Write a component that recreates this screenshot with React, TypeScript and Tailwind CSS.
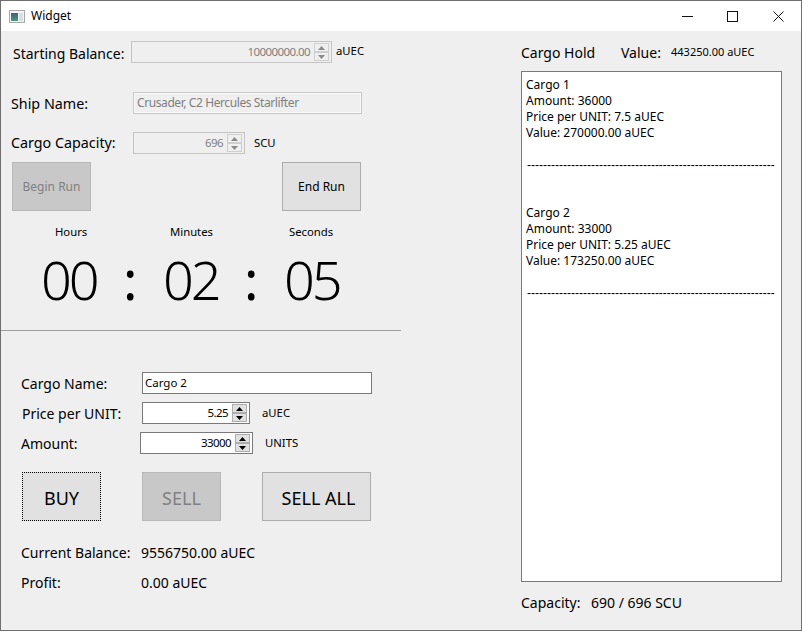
const font = { fontFamily: '"Noto Sans", "Open Sans", sans-serif' };

function Spin({ value, disabled, width, textRight }: { value: string; disabled?: boolean; width: string; textRight: string }) {
  const arrow = disabled ? "#8a8a8a" : "#000000";
  const btn = disabled
    ? "flex-1 flex items-center justify-center border border-[#cfcfcf] bg-[#efefef]"
    : "flex-1 flex items-center justify-center border border-[#adadad] bg-[#e1e1e1]";
  return (
    <div className={`${width} h-[22px] flex items-center border ${disabled ? "border-[#c4c4c4] bg-[#efefef] text-[#808080]" : "border-[#7a7a7a] bg-white text-black"} text-[11.5px] tracking-[-0.58px]`}>
      <div className={`flex-1 text-right ${textRight}`}>{value}</div>
      <div className="w-[15px] h-[18px] mr-[2px] flex flex-col">
        <div className={btn}>
          <svg width="7" height="4" viewBox="0 0 7 4"><path d="M3.5 0L7 4H0z" fill={arrow} /></svg>
        </div>
        <div className={btn}>
          <svg width="7" height="4" viewBox="0 0 7 4"><path d="M0 0H7L3.5 4z" fill={arrow} /></svg>
        </div>
      </div>
    </div>
  );
}

function Btn({ label, disabled, focused, width, size }: { label: string; disabled?: boolean; focused?: boolean; width: string; size: string }) {
  return (
    <div className={`${width} h-[49px] flex items-center justify-center border ${size} ${disabled ? "bg-[#c8c8c8] border-[#b8b8b8] text-[#808080]" : "bg-[#e1e1e1] border-[#adadad] text-black"} ${focused ? "border-dotted border-black" : ""}`}>
      {label}
    </div>
  );
}

export default function App() {
  const cargo = [
    ["Cargo 1", "Amount: 36000", "Price per UNIT: 7.5 aUEC", "Value: 270000.00 aUEC"],
    ["Cargo 2", "Amount: 33000", "Price per UNIT: 5.25 aUEC", "Value: 173250.00 aUEC"],
  ];
  return (
    <div style={font} className="w-[802px] h-[631px] border border-[#6f6f6f] bg-[#efefef] text-black flex flex-col overflow-hidden whitespace-nowrap">
      <div className="h-[30px] bg-white flex items-center shrink-0">
        <svg className="ml-[8px]" width="16" height="13" viewBox="0 0 16 13">
          <defs>
            <linearGradient id="g" x1="0" y1="0" x2="0" y2="1">
              <stop offset="0" stopColor="#3d5f78" />
              <stop offset="1" stopColor="#4f9a78" />
            </linearGradient>
          </defs>
          <rect x="0.5" y="0.5" width="15" height="12" fill="#f4f4f4" stroke="#a8a8a8" />
          <rect x="2" y="3" width="7" height="8" fill="url(#g)" />
          <rect x="10" y="3" width="4" height="8" fill="#d5e0e0" />
        </svg>
        <span className="ml-[6px] text-[12px] leading-none">Widget</span>
        <div className="ml-auto flex items-center h-full">
          <svg className="mr-[34px]" width="11" height="11" viewBox="0 0 11 11"><path d="M0 5.5H11" stroke="#111" /></svg>
          <svg className="mr-[35px]" width="11" height="11" viewBox="0 0 11 11"><rect x="0.5" y="0.5" width="10" height="10" fill="none" stroke="#111" /></svg>
          <svg className="mr-[17px]" width="11" height="11" viewBox="0 0 11 11"><path d="M0.5 0.5L10.5 10.5M10.5 0.5L0.5 10.5" stroke="#111" /></svg>
        </div>
      </div>

      <div className="flex-1 flex">
        <div className="w-[400px] shrink-0 flex flex-col">
          <div className="mt-[10px] h-[22px] flex items-center pl-[12px] text-[14px]">
            <span className="w-[118px] mt-[2px]">Starting Balance:</span>
            <Spin value="10000000.00" disabled width="w-[201px]" textRight="pr-[4px]" />
            <span className="ml-[4px] text-[11.3px] -mt-[2px]">aUEC</span>
          </div>
          <div className="mt-[29px] h-[22px] flex items-center pl-[10px] text-[14.3px]">
            <span className="w-[122px] mt-[2px]">Ship Name:</span>
            <div className="w-[229px] h-[22px] border border-[#c8c8c8] shadow-[inset_0_0_0_1px_#f8f8f8] flex items-center pl-[3px] text-[12px] tracking-[-0.41px] text-[#808080]">Crusader, C2 Hercules Starlifter</div>
          </div>
          <div className="mt-[18px] h-[22px] flex items-center pl-[10px] text-[14.3px]">
            <span className="w-[122px]">Cargo Capacity:</span>
            <Spin value="696" disabled width="w-[112px]" textRight="pr-[4px]" />
            <span className="ml-[9px] text-[11.3px]">SCU</span>
          </div>
          <div className="mt-[8px] flex pl-[11px] gap-[191px]">
            <Btn label="Begin Run" disabled width="w-[79px]" size="text-[12px] pt-[1px]" />
            <Btn label="End Run" width="w-[79px]" size="text-[12px] pt-[1px]" />
          </div>

          <div className="mt-[13px] flex items-center h-[16px] text-[11.3px]">
            <span className="ml-[54px] w-[115px]">Hours</span>
            <span className="w-[119px]">Minutes</span>
            <span>Seconds</span>
          </div>
          <div className="mt-[9px] h-[60px] flex items-center text-[54px] font-light leading-none tracking-[-3px]">
            <span className="ml-[40px] w-[82px]">00</span>
            <span className="w-[40px] font-normal">:</span>
            <span className="w-[81px]">02</span>
            <span className="w-[40px] font-normal">:</span>
            <span>05</span>
          </div>
          <div className="mt-[21px] h-px bg-[#a0a0a0]" />

          <div className="mt-[41px] h-[22px] flex items-center pl-[20px] text-[14px]">
            <span className="w-[121px]">Cargo Name:</span>
            <div className="w-[230px] h-[22px] bg-white border border-[#7a7a7a] flex items-center pl-[2px] text-[11.5px]">Cargo 2</div>
          </div>
          <div className="mt-[8px] h-[22px] flex items-center pl-[21px] text-[14px]">
            <span className="w-[120px]">Price per UNIT:</span>
            <Spin value="5.25" width="w-[108px]" textRight="pr-[4px]" />
            <span className="ml-[12px] text-[11.3px]">aUEC</span>
          </div>
          <div className="mt-[8px] h-[22px] flex items-center pl-[20px] text-[14px]">
            <span className="w-[119px]">Amount:</span>
            <Spin value="33000" width="w-[113px]" textRight="pr-[4px]" />
            <span className="ml-[12px] text-[11.3px]">UNITS</span>
          </div>
          <div className="mt-[18px] flex pl-[21px]">
            <Btn label="BUY" focused width="w-[79px]" size="text-[18px] pt-[3px]" />
            <div className="ml-[41px]"><Btn label="SELL" disabled width="w-[79px]" size="text-[18px] pt-[3px]" /></div>
            <div className="ml-[41px]"><Btn label="SELL ALL" width="w-[109px]" size="text-[18px] pl-[4px] pt-[3px]" /></div>
          </div>
          <div className="mt-[21px] h-[20px] flex items-center pl-[20px] text-[14px]">
            <span className="w-[120px]">Current Balance:</span>
            <span>9556750.00 aUEC</span>
          </div>
          <div className="mt-[10px] h-[20px] flex items-center pl-[20px] text-[14px]">
            <span className="w-[120px]">Profit:</span>
            <span>0.00 aUEC</span>
          </div>
        </div>

        <div className="ml-[120px] w-[261px] flex flex-col">
          <div className="mt-[10px] h-[22px] flex items-center text-[14px]">
            <span className="w-[100px]">Cargo Hold</span>
            <span className="w-[50px]">Value:</span>
            <span className="text-[11px]">443250.00 aUEC</span>
          </div>
          <div className="mt-[8px] h-[511px] bg-white border border-[#7a7a7a] pt-[5px] pl-[4px] pr-[5px] text-[12px] leading-[16px] overflow-hidden">
            {cargo.map((c, i) => (
              <div key={i} className={i === 0 ? "" : "mt-[32px]"}>
                {c.map((l) => <div key={l} className="h-[16px]">{l}</div>)}
                <div className="h-[16px]" />
                <div className="h-[16px] pl-px overflow-hidden font-['Liberation_Sans']">{"-".repeat(62)}</div>
              </div>
            ))}
          </div>
          <div className="mt-[10px] h-[20px] flex items-center text-[14px]">
            <span className="w-[70px]">Capacity:</span>
            <span>690 / 696 SCU</span>
          </div>
        </div>
      </div>
    </div>
  );
}
